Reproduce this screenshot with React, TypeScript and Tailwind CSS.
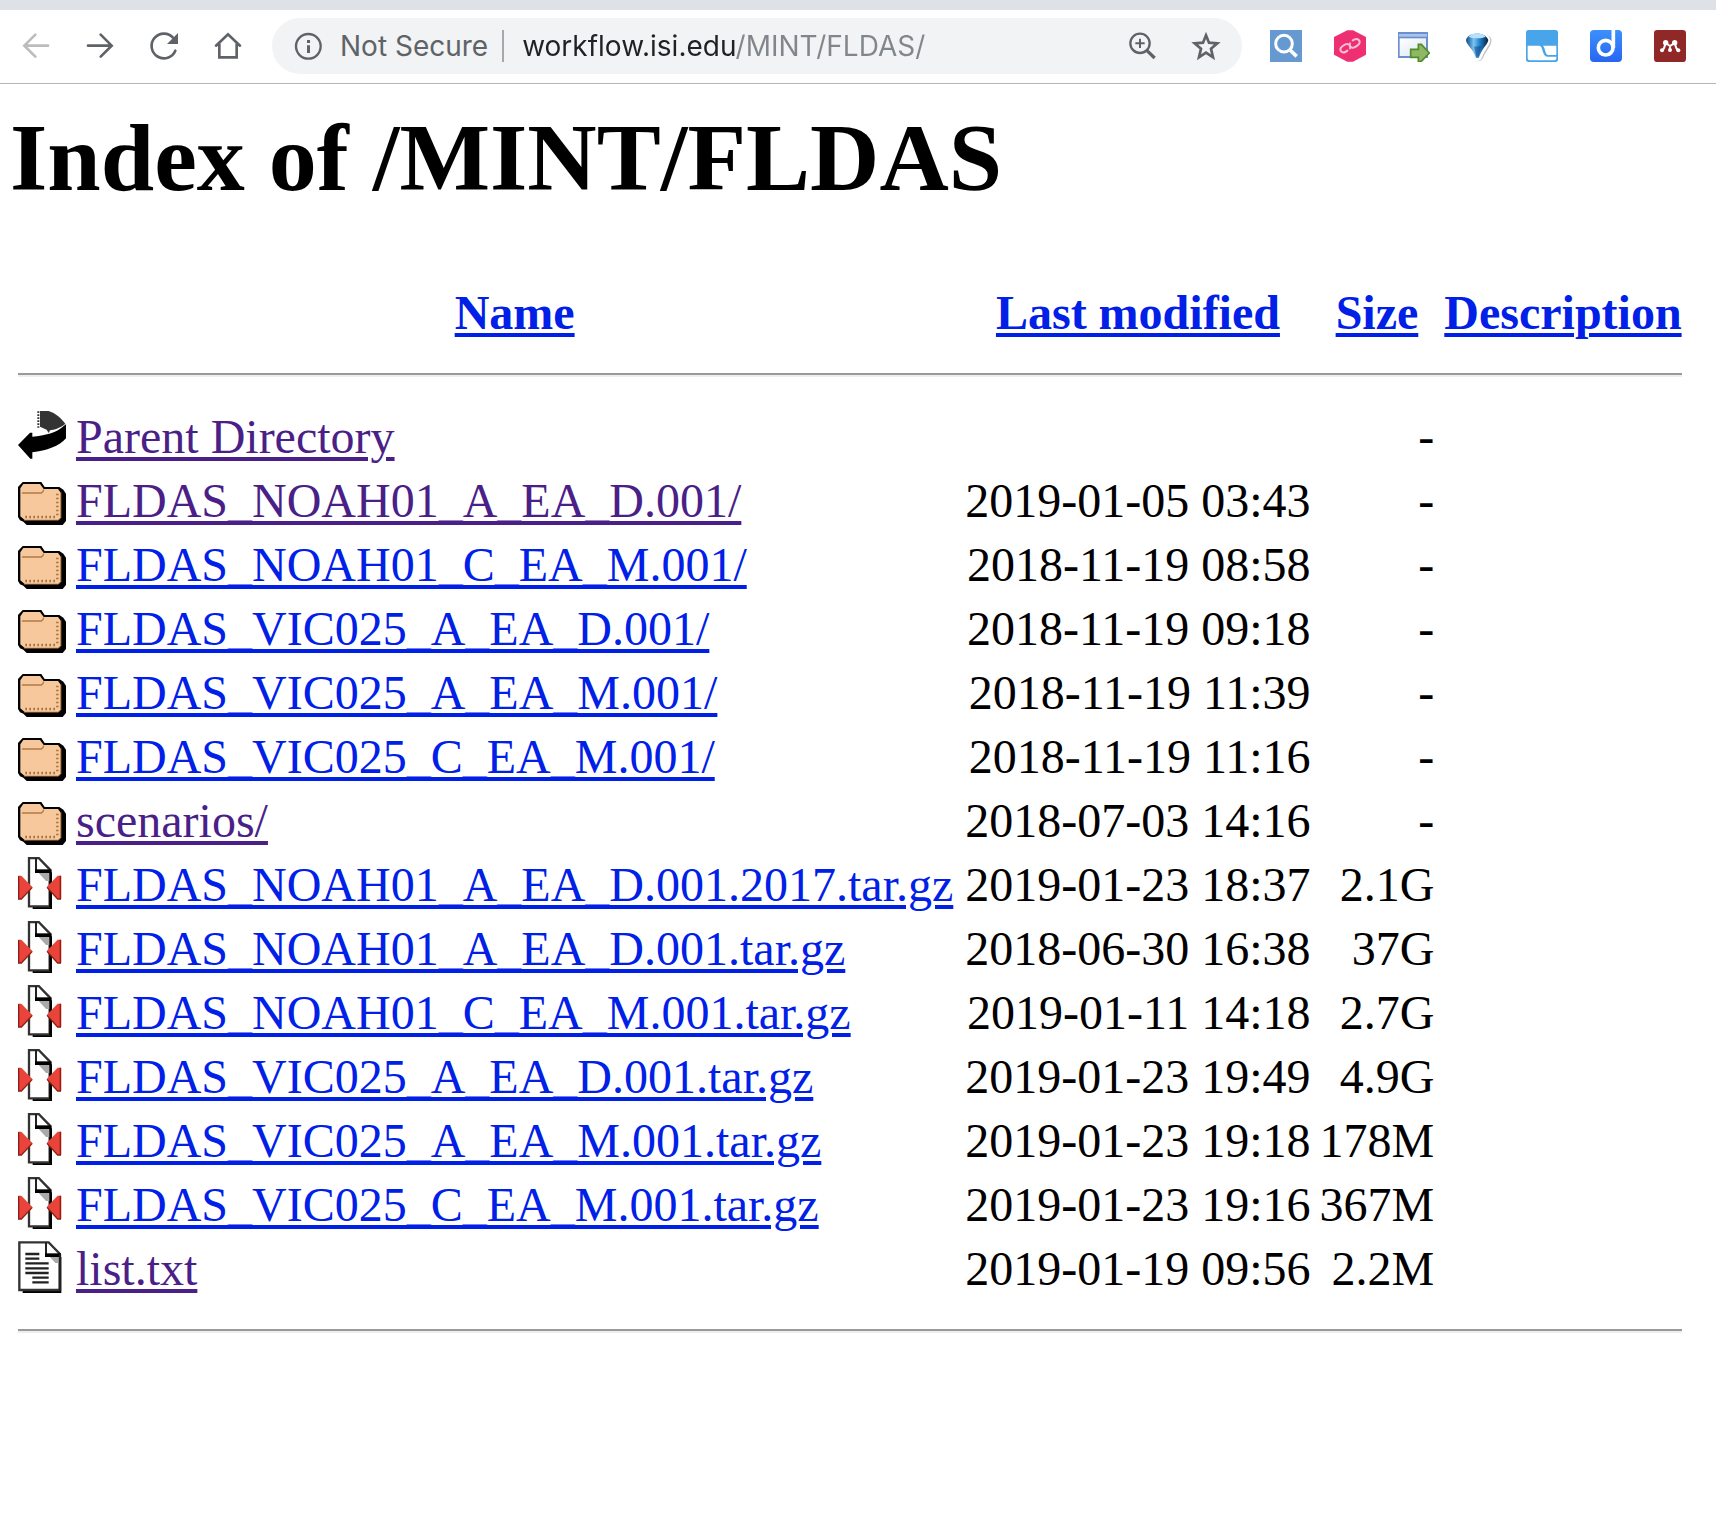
import type { ReactNode } from 'react'

type Kind = 'back' | 'folder' | 'compressed' | 'text'

interface Entry {
  kind: Kind
  name: string
  modified: string
  size: string
  visited?: boolean
}

const entries: Entry[] = [
  { kind: 'back', name: 'Parent Directory', modified: '', size: '-', visited: true },
  { kind: 'folder', name: 'FLDAS_NOAH01_A_EA_D.001/', modified: '2019-01-05 03:43', size: '-', visited: true },
  { kind: 'folder', name: 'FLDAS_NOAH01_C_EA_M.001/', modified: '2018-11-19 08:58', size: '-' },
  { kind: 'folder', name: 'FLDAS_VIC025_A_EA_D.001/', modified: '2018-11-19 09:18', size: '-' },
  { kind: 'folder', name: 'FLDAS_VIC025_A_EA_M.001/', modified: '2018-11-19 11:39', size: '-' },
  { kind: 'folder', name: 'FLDAS_VIC025_C_EA_M.001/', modified: '2018-11-19 11:16', size: '-' },
  { kind: 'folder', name: 'scenarios/', modified: '2018-07-03 14:16', size: '-', visited: true },
  { kind: 'compressed', name: 'FLDAS_NOAH01_A_EA_D.001.2017.tar.gz', modified: '2019-01-23 18:37', size: '2.1G' },
  { kind: 'compressed', name: 'FLDAS_NOAH01_A_EA_D.001.tar.gz', modified: '2018-06-30 16:38', size: '37G' },
  { kind: 'compressed', name: 'FLDAS_NOAH01_C_EA_M.001.tar.gz', modified: '2019-01-11 14:18', size: '2.7G' },
  { kind: 'compressed', name: 'FLDAS_VIC025_A_EA_D.001.tar.gz', modified: '2019-01-23 19:49', size: '4.9G' },
  { kind: 'compressed', name: 'FLDAS_VIC025_A_EA_M.001.tar.gz', modified: '2019-01-23 19:18', size: '178M' },
  { kind: 'compressed', name: 'FLDAS_VIC025_C_EA_M.001.tar.gz', modified: '2019-01-23 19:16', size: '367M' },
  { kind: 'text', name: 'list.txt', modified: '2019-01-19 09:56', size: '2.2M', visited: true },
]

/* File type icons, all on a 144 x 159 grid */

const BackIcon = () => (
  <svg viewBox="0 0 144 159" className="h-[53px] w-12" aria-hidden="true">
    <path d="M0 108 L36 71 H43 V83 C80 80 118 70 138 50 L144 46 V88 C125 112 85 125 43 130 V149 H37 Z" fill="#000" />
    <path d="M66 6 H92 C112 12 130 28 142 44 C128 57 108 62 96 64 L92 72 L86 62 L66 53 Z" fill="#333" />
    <path d="M61 7 V56" stroke="#333" strokeWidth="6" strokeDasharray="5 4" />
  </svg>
)

const FolderIcon = () => (
  <svg viewBox="0 0 144 159" className="h-[53px] w-12" aria-hidden="true">
    <path d="M0 42 L14 27 H70 L80 42 H124 L136 50 L144 62 V144 L134 156 H26 L16 146 L6 142 L0 132 Z" fill="#000" />
    <path d="M7 46 L16 33 H66 L77 48 H120 L129 60 V134 L122 141 H20 L7 130 Z" fill="#f7c89b" />
    <path d="M12 60 H70 Q76 58 77 50" fill="none" stroke="#b07a48" strokeWidth="4" />
    <path d="M118 62 V132" stroke="#a5703f" strokeWidth="7" strokeDasharray="5 7" />
    <path d="M22 132 H118" stroke="#a5703f" strokeWidth="7" strokeDasharray="5 7" />
    <path d="M129 58 V134 L121 142 H18" fill="none" stroke="#7c4d25" strokeWidth="3" />
  </svg>
)

const CompressedIcon = () => (
  <svg viewBox="0 0 144 159" className="h-[53px] w-12" aria-hidden="true">
    <path d="M44 147 H93 V48 H102 V156 H44 Z" fill="#000" />
    <path d="M33 3 H62 L95 37 V148 H33 Z" fill="#fff" stroke="#333" strokeWidth="7" />
    <path d="M62 48 H97 V72 H84 Z" fill="#aaa" />
    <path d="M54 3 V43" fill="none" stroke="#222" strokeWidth="6" />
    <path d="M51 37 H101 V48 H51 Z" fill="#000" />
    <path d="M98 46 V150" stroke="#000" strokeWidth="8" />
    <path d="M0 56 H10 L43 90 L10 126 H0 Z" fill="#e8443a" />
    <path d="M2 58 V126 H10 L43 91" fill="none" stroke="#8f1d18" strokeWidth="4" />
    <path d="M130 56 H119 L86 90 L119 126 H130 Z" fill="#e8443a" />
    <path d="M127 56 V126 H119 L87 91" fill="none" stroke="#8f1d18" strokeWidth="4" />
  </svg>
)

const TextIcon = () => (
  <svg viewBox="0 0 144 159" className="h-[53px] w-12" aria-hidden="true">
    <path d="M14 147 H122 V48 H130 V156 H14 Z" fill="#000" />
    <path d="M4 4 H92 L125 38 V147 H4 Z" fill="#fff" stroke="#333" strokeWidth="7" />
    <path d="M94 46 H124 V66 H112 Z" fill="#aaa" />
    <path d="M84 4 V43" fill="none" stroke="#222" strokeWidth="6" />
    <path d="M81 37 H129 V48 H81 Z" fill="#000" />
    <path d="M126 40 V150" stroke="#222" strokeWidth="7" />
    <path d="M22 39 H64 M22 53 H64 M22 67 H92 M22 82 H92 M22 96 H64 M43 96 H92 M43 110 H92 M43 124 H92" stroke="#222" strokeWidth="7" />
  </svg>
)

const icons: Record<Kind, ReactNode> = {
  back: <BackIcon />,
  folder: <FolderIcon />,
  compressed: <CompressedIcon />,
  text: <TextIcon />,
}

/* Toolbar buttons */

function NavButton({ label, dim, children }: { label: string; dim?: boolean; children: ReactNode }) {
  return (
    <button type="button" aria-label={label} className="flex h-14 w-16 items-center justify-center">
      <svg
        viewBox="0 0 96 96"
        className={dim ? 'size-8 text-[#babcbe]' : 'size-8 text-[#5f6368]'}
        fill="none"
        stroke="currentColor"
        strokeWidth="8"
        strokeLinecap="round"
        aria-hidden="true"
      >
        {children}
      </svg>
    </button>
  )
}

function Extension({ label, children }: { label: string; children: ReactNode }) {
  return (
    <button type="button" aria-label={label} className="size-8 shrink-0">
      <svg viewBox="0 0 96 96" className="size-8" aria-hidden="true">
        {children}
      </svg>
    </button>
  )
}

function Toolbar() {
  return (
    <header className="border-b border-[#b4b5b6] font-['Inter',sans-serif]">
      <div className="h-[10px] bg-[#dee1e6]" />
      <div className="flex items-center pt-2 pr-[30px] pb-[9px] pl-1">
        <nav className="mr-3 flex" aria-label="Navigation">
          <NavButton label="Back" dim>
            <path d="M84 47 H14 M46 14 L13 47 L46 80" />
          </NavButton>
          <NavButton label="Forward">
            <path d="M12 47 H82 M50 14 L83 47 L50 80" />
          </NavButton>
          <NavButton label="Reload">
            <path d="M82 62 A37 37 0 1 1 76 24" />
            <path d="M90 9 V42 H57 Z" fill="currentColor" stroke="none" />
          </NavButton>
          <NavButton label="Home">
            <path d="M12 47 L48 13 L84 47 M22 42 V82 H74 V42" strokeLinejoin="miter" />
          </NavButton>
        </nav>

        <div className="flex h-14 flex-1 items-center rounded-full bg-[#f1f3f4] pr-5 pl-5">
          <button type="button" className="flex shrink-0 items-center gap-4 text-[28px] leading-8 text-[#5f6368]">
            <svg viewBox="0 0 96 96" className="size-8" aria-hidden="true">
              <circle cx="49" cy="49" r="37" fill="none" stroke="currentColor" strokeWidth="7" />
              <path d="M45 30 H54 V39 H45 Z M45 46 H54 V69 H45 Z" fill="currentColor" />
            </svg>
            Not Secure
          </button>
          <div className="ml-[14px] h-8 w-[2px] bg-[#a6a8ab]" />
          <input
            type="text"
            aria-label="Address"
            defaultValue="workflow.isi.edu/MINT/FLDAS/"
            className="ml-[18px] h-10 min-w-0 flex-1 bg-[linear-gradient(to_right,#202124_213px,#80868b_213px)] bg-clip-text text-[28px] text-transparent caret-black outline-none"
          />
          <button type="button" aria-label="Zoom" className="flex size-16 items-center justify-center text-[#5f6368]">
            <svg viewBox="0 0 96 96" className="size-8" fill="none" stroke="currentColor" aria-hidden="true">
              <circle cx="42" cy="40" r="29" strokeWidth="7" />
              <path d="M63 62 L86 84" strokeWidth="10" />
              <path d="M28 40 H56 M42 26 V54" strokeWidth="6" />
            </svg>
          </button>
          <button type="button" aria-label="Bookmark" className="-mr-4 flex size-16 items-center justify-center text-[#5f6368]">
            <svg viewBox="0 0 96 96" className="size-8" aria-hidden="true">
              <path d="M48 16 L57 38 L82 40 L63 56 L69 82 L48 68 L27 82 L33 56 L14 40 L39 38 Z" fill="none" stroke="currentColor" strokeWidth="8" />
            </svg>
          </button>
        </div>

        <div className="ml-7 flex gap-8">
          <Extension label="Search">
            <path d="M0 0 H96 V96 H0 Z" fill="#6699cf" />
            <circle cx="42" cy="41" r="25" fill="none" stroke="#fff" strokeWidth="9" />
            <path d="M60 60 L80 79" stroke="#fff" strokeWidth="11" />
          </Extension>
          <Extension label="Link">
            <path d="M40 1 H57 L96 21 V74 L57 95 H40 L0 74 V21 Z" fill="#ee3073" />
            <g fill="none" stroke="#fbc0d5" strokeWidth="6" strokeLinecap="round">
              <path d="M40 62 L34 66 C25 70 18 63 19 57 C20 51 35 40 41 42 C48 43 51 50 48 55" />
              <path d="M56 31 L62 28 C71 24 78 31 77 38 C76 44 61 55 55 53 C47 51 44 45 48 40" />
            </g>
          </Extension>
          <Extension label="Open in window">
            <defs>
              <linearGradient id="pane" x1="0" y1="0" x2="1" y2="1">
                <stop offset="0" stopColor="#fff" />
                <stop offset="1" stopColor="#dce5f4" />
              </linearGradient>
            </defs>
            <path d="M0 6 H90 V84 H0 Z" fill="#6c8fce" />
            <path d="M3 12 H87 V20 H3 Z" fill="#a9c4ec" />
            <path d="M5 25 H84 V78 H5 Z" fill="url(#pane)" />
            <path d="M38 58 H61 V43 H70 L94 69 L70 94 H61 V82 H38 Z" fill="#8fb865" stroke="#528b2c" strokeWidth="5" />
          </Extension>
          <Extension label="Balloon">
            <defs>
              <linearGradient id="balloon" x1="0" y1="0" x2="1" y2="0">
                <stop offset="0" stopColor="#0c4785" />
                <stop offset=".35" stopColor="#7cc4f4" />
                <stop offset=".6" stopColor="#2484d0" />
                <stop offset="1" stopColor="#071e3c" />
              </linearGradient>
            </defs>
            <path d="M12 30 C24 8 76 6 88 26 C92 46 74 58 64 82 C58 97 42 98 37 84 C30 62 10 50 12 30 Z" fill="#c4c4c4" />
            <path d="M5 30 C16 3 74 1 84 26 C88 43 69 55 60 82 C55 97 37 97 33 84 C25 62 3 50 5 30 Z" fill="#fff" />
            <path d="M12 30 C18 4 70 4 79 30 C77 43 63 53 54 74 L50 84 H42 L38 74 C29 53 13 44 12 30 Z" fill="url(#balloon)" />
            <path d="M20 20 C32 7 60 7 71 20 C56 26 36 26 20 20 Z" fill="#b9e0fa" />
            <path d="M36 50 L58 48 L49 80 H43 Z" fill="#123f70" opacity=".5" />
          </Extension>
          <Extension label="Split view">
            <rect width="96" height="96" rx="8" fill="#48a5e9" />
            <path d="M5 47 H40 C52 48 48 80 64 80 H91 V85 Q91 91 85 91 H11 Q5 91 5 85 Z" fill="#fff" />
            <path d="M51 47 H91 V75 H67 C57 75 59 55 51 47 Z" fill="#fff" />
          </Extension>
          <Extension label="Docs">
            <defs>
              <linearGradient id="docs" x1="0" y1="0" x2="0" y2="1">
                <stop offset="0" stopColor="#3b91fb" />
                <stop offset="1" stopColor="#2865f2" />
              </linearGradient>
            </defs>
            <rect width="96" height="96" rx="12" fill="url(#docs)" />
            <circle cx="47" cy="53" r="22" fill="none" stroke="#fff" strokeWidth="11" />
            <path d="M70 0 V54" stroke="#fff" strokeWidth="11" />
          </Extension>
          <Extension label="Library">
            <rect width="96" height="96" rx="10" fill="#902827" />
            <g fill="#fff">
              <circle cx="35" cy="38" r="8" />
              <circle cx="62" cy="38" r="8" />
              <circle cx="48" cy="60" r="6" />
              <circle cx="24" cy="61" r="6" />
              <circle cx="73" cy="61" r="6" />
            </g>
            <path d="M24 61 C32 58 31 48 35 39 L48 48 L62 39 C66 48 65 58 73 61 M48 46 V58" fill="none" stroke="#fff" strokeWidth="6" />
          </Extension>
        </div>
      </div>
    </header>
  )
}

function Rule() {
  return <hr className="h-1 border-t-2 border-b-2 border-t-[#9a9a9a] border-b-[#eeeeee]" />
}

const linkStyle = 'underline decoration-4 underline-offset-4'

export default function App() {
  return (
    <div className="min-h-screen bg-white text-black">
      <Toolbar />
      <main className="px-[10px] pt-[26px] font-['Liberation_Serif',serif]">
        <h1 className="text-[96px] leading-[96px] font-bold">Index of /MINT/FLDAS</h1>
        <table className="mt-[79px] ml-2 border-collapse text-5xl leading-[56px] whitespace-nowrap">
          <thead>
            <tr className="text-center text-[#0020e8]">
              <td className="p-0" />
              <th scope="col" className="p-0 pl-[10px]">
                <a href="#name" className={linkStyle}>Name</a>
              </th>
              <th scope="col" className="p-0 pl-3">
                <a href="#modified" className={linkStyle}>Last modified</a>
              </th>
              <th scope="col" className="p-0 pl-[9px]">
                <a href="#size" className={linkStyle}>Size</a>
              </th>
              <th scope="col" className="p-0 pl-[10px]">
                <a href="#description" className={linkStyle}>Description</a>
              </th>
            </tr>
            <tr>
              <td colSpan={5} className="py-8">
                <Rule />
              </td>
            </tr>
          </thead>
          <tbody>
            {entries.map((entry) => (
              <tr key={entry.name} className="h-16 align-top">
                <td className="p-0">{icons[entry.kind]}</td>
                <td className="p-0 pl-[10px]">
                  <a
                    href={'#' + entry.name}
                    className={
                      entry.visited
                        ? 'text-[#4b1f88] underline decoration-4 underline-offset-4'
                        : 'text-[#0020e8] underline decoration-4 underline-offset-4'
                    }
                  >
                    {entry.name}
                  </a>
                </td>
                <td className="p-0 pl-3 text-right">{entry.modified}</td>
                <td className="p-0 pl-[9px] text-right">{entry.size}</td>
                <td className="p-0" />
              </tr>
            ))}
            <tr>
              <td colSpan={5} className="pt-6">
                <Rule />
              </td>
            </tr>
          </tbody>
        </table>
      </main>
    </div>
  )
}
